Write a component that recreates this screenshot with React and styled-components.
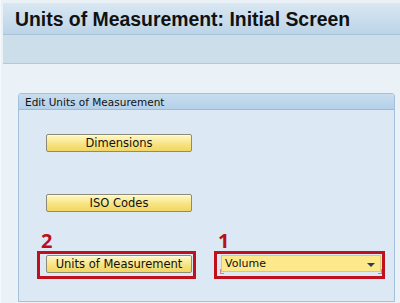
import styled, { createGlobalStyle } from 'styled-components';

const GlobalStyle = createGlobalStyle`
  html, body {
    margin: 0;
    padding: 0;
    background: #eef3f8;
  }
  #root {
    width: 400px;
    height: 303px;
    overflow: hidden;
  }
`;

const Screen = styled.div`
  width: 400px;
  height: 303px;
  display: flex;
  flex-direction: column;
  background: #eaf1f7;
  font-family: 'DejaVu Sans', 'Liberation Sans', sans-serif;
  padding: 3px 0 0 2px;
  box-sizing: border-box;
  border-left: 1px solid #f6f9fb;
`;

const TitleBar = styled.div`
  height: 32px;
  display: flex;
  align-items: center;
  padding: 2px 0 0 12px;
  box-sizing: border-box;
  background: linear-gradient(#d9e7f2, #bcd4e7);
  border-bottom: 1px solid #a9c3d8;
  font-family: 'Liberation Sans', Arial, sans-serif;
  font-size: 19.4px;
  font-weight: bold;
  color: #111;
`;

const Toolbar = styled.div`
  height: 28px;
  background: #cddeeb;
  border-bottom: 1px solid #b3c8d9;
`;

const Content = styled.div`
  padding: 29px 5px 0 15px;
`;

const Group = styled.div`
  height: 207px;
  border: 1px solid #a3c1dc;
  border-radius: 3px 3px 0 0;
  background: #dce9f5;
  display: flex;
  flex-direction: column;
`;

const GroupHeader = styled.div`
  height: 15px;
  display: flex;
  align-items: center;
  padding-left: 6px;
  background: linear-gradient(#c8def0, #b4d0e8);
  border-bottom: 1px solid #9dbbd6;
  font-size: 10.5px;
  color: #111;
`;

const GroupBody = styled.div`
  display: flex;
  flex-direction: column;
  padding-top: 24px;
`;

const ButtonStack = styled.div`
  display: flex;
  flex-direction: column;
  gap: 42px;
  padding-left: 27px;
`;

const SapButton = styled.div`
  width: 146px;
  height: 18px;
  box-sizing: border-box;
  display: flex;
  align-items: center;
  justify-content: center;
  border: 1px solid #8d8a78;
  border-radius: 2px;
  background: linear-gradient(#fff8c8, #f7e27e 60%, #f1d665);
  box-shadow: inset 0 1px 0 #fffbe0;
  font-size: 11.5px;
  color: #111;
`;

const MarkerRow = styled.div`
  display: flex;
  gap: 18px;
  padding-left: 18px;
  margin-top: 20px;
`;

const Marker = styled.div`
  display: flex;
  flex-direction: column;
`;

const MarkerNumber = styled.div`
  height: 18px;
  padding-left: 4px;
  margin-bottom: 1px;
  font-family: 'Open Sans', 'DejaVu Sans', sans-serif;
  font-size: 20px;
  line-height: 18px;
  font-weight: bold;
  color: #b8101a;
`;

const RedFrame = styled.div`
  width: ${(p) => p.$w}px;
  height: 28px;
  box-sizing: border-box;
  border: 3px solid #c0101c;
  padding: 1px 1px 0 ${(p) => p.$pl}px;
  display: flex;
  align-items: flex-start;
`;

const Dropdown = styled.div`
  position: relative;
  width: 161px;
  height: 17px;
  box-sizing: border-box;
  display: flex;
  align-items: center;
  justify-content: space-between;
  padding: 0 5px 0 3px;
  background: #fde98c;
  border: 1px solid #d8c97a;
  font-size: 11px;
  color: #111;

  &::before,
  &::after {
    content: '';
    position: absolute;
    bottom: -3px;
    width: 3px;
    height: 4px;
    border-bottom: 1px solid #e57a86;
  }
  &::before {
    left: -2px;
    border-left: 1px solid #e57a86;
  }
  &::after {
    right: -2px;
    border-right: 1px solid #e57a86;
  }
`;

const Arrow = styled.span`
  width: 0;
  height: 0;
  border-left: 4px solid transparent;
  border-right: 4px solid transparent;
  border-top: 4px solid #2b3d5c;
  margin-top: 2px;
`;

export default function App() {
  return (
    <>
      <GlobalStyle />
      <Screen>
        <TitleBar>Units of Measurement: Initial Screen</TitleBar>
        <Toolbar />
        <Content>
          <Group>
            <GroupHeader>Edit Units of Measurement</GroupHeader>
            <GroupBody>
              <ButtonStack>
                <SapButton>Dimensions</SapButton>
                <SapButton>ISO Codes</SapButton>
              </ButtonStack>
              <MarkerRow>
                <Marker>
                  <MarkerNumber>2</MarkerNumber>
                  <RedFrame $w={159} $pl={6}>
                    <SapButton>Units of Measurement</SapButton>
                  </RedFrame>
                </Marker>
                <Marker>
                  <MarkerNumber>1</MarkerNumber>
                  <RedFrame $w={171} $pl={4}>
                    <Dropdown>
                      Volume
                      <Arrow />
                    </Dropdown>
                  </RedFrame>
                </Marker>
              </MarkerRow>
            </GroupBody>
          </Group>
        </Content>
      </Screen>
    </>
  );
}
